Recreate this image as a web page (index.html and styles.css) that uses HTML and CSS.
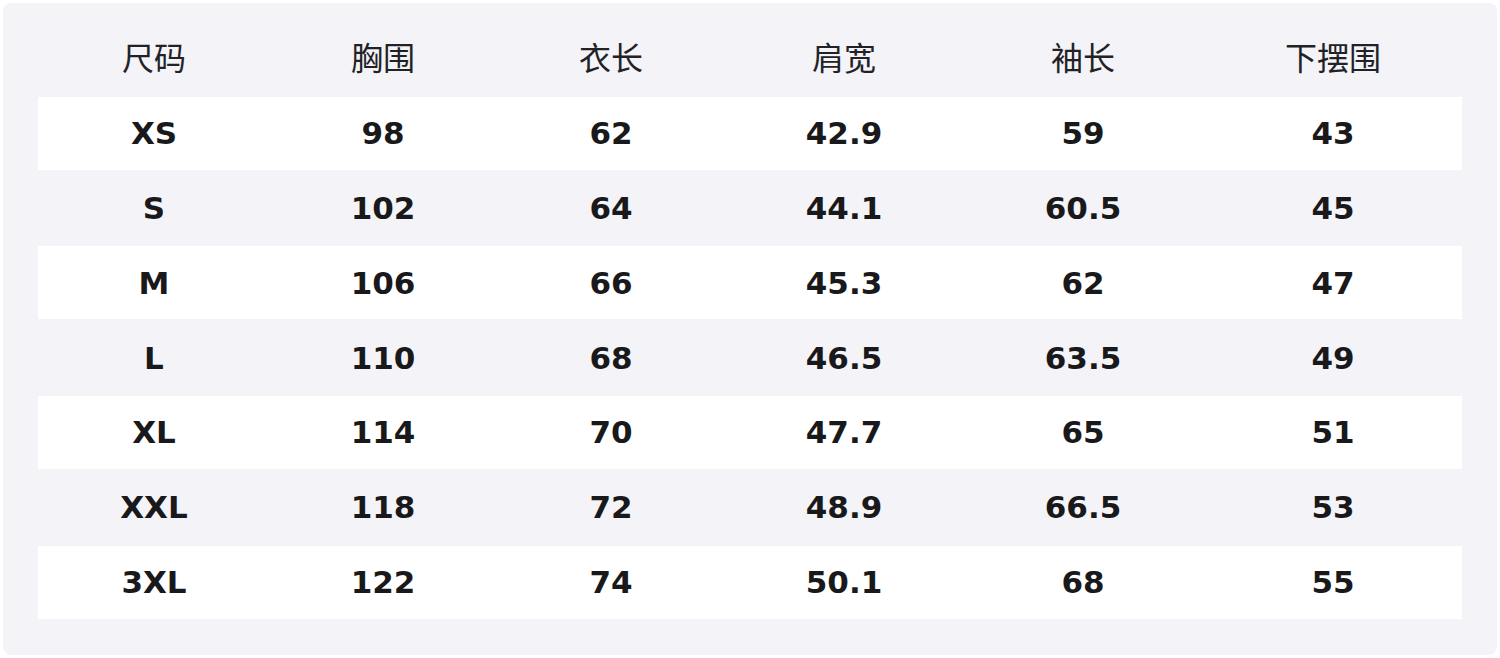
FILE: index.html
```html
<!DOCTYPE html>
<html lang="zh">
<head>
<meta charset="utf-8">
<title>尺码表</title>
<link rel="stylesheet" href="styles.css">
</head>
<body>
<div class="panel">
  <div class="size-table">
    <div class="row head">
      <div class="cell">尺码</div><div class="cell">胸围</div><div class="cell">衣长</div><div class="cell">肩宽</div><div class="cell">袖长</div><div class="cell">下摆围</div>
    </div>
    <div class="row odd">
      <div class="cell">XS</div><div class="cell">98</div><div class="cell">62</div><div class="cell">42.9</div><div class="cell">59</div><div class="cell">43</div>
    </div>
    <div class="row even">
      <div class="cell">S</div><div class="cell">102</div><div class="cell">64</div><div class="cell">44.1</div><div class="cell">60.5</div><div class="cell">45</div>
    </div>
    <div class="row odd">
      <div class="cell">M</div><div class="cell">106</div><div class="cell">66</div><div class="cell">45.3</div><div class="cell">62</div><div class="cell">47</div>
    </div>
    <div class="row even">
      <div class="cell">L</div><div class="cell">110</div><div class="cell">68</div><div class="cell">46.5</div><div class="cell">63.5</div><div class="cell">49</div>
    </div>
    <div class="row odd">
      <div class="cell">XL</div><div class="cell">114</div><div class="cell">70</div><div class="cell">47.7</div><div class="cell">65</div><div class="cell">51</div>
    </div>
    <div class="row even">
      <div class="cell">XXL</div><div class="cell">118</div><div class="cell">72</div><div class="cell">48.9</div><div class="cell">66.5</div><div class="cell">53</div>
    </div>
    <div class="row odd">
      <div class="cell">3XL</div><div class="cell">122</div><div class="cell">74</div><div class="cell">50.1</div><div class="cell">68</div><div class="cell">55</div>
    </div>
  </div>
</div>
</body>
</html>
```

FILE: styles.css
```css
html, body {
  margin: 0;
  padding: 0;
  background: #ffffff;
}
body {
  padding: 3px;
  font-family: "DejaVu Sans", "Noto Sans CJK SC", sans-serif;
  color: #19191b;
}
.panel {
  width: 1494px;
  height: 652px;
  box-sizing: border-box;
  padding: 19px 35px 36px;
  background: #f3f3f8;
  border-radius: 8px;
}
.size-table {
  display: flex;
  flex-direction: column;
  gap: 1.8px;
}
.row {
  display: grid;
  grid-template-columns: 232px 226px 230px 236px 242px 258px;
  height: 73px;
  align-items: center;
}
.cell {
  text-align: center;
  white-space: nowrap;
}
.head {
  box-sizing: border-box;
  padding-bottom: 6px;
}
.head .cell {
  font-family: "Noto Sans CJK SC", "DejaVu Sans", sans-serif;
  font-size: 32px;
  font-weight: 400;
  color: #222226;
}
.odd, .even {
  font-size: 31px;
  font-weight: 700;
}
.odd {
  background: #ffffff;
}
.even {
  background: #f4f4f8;
}
```
